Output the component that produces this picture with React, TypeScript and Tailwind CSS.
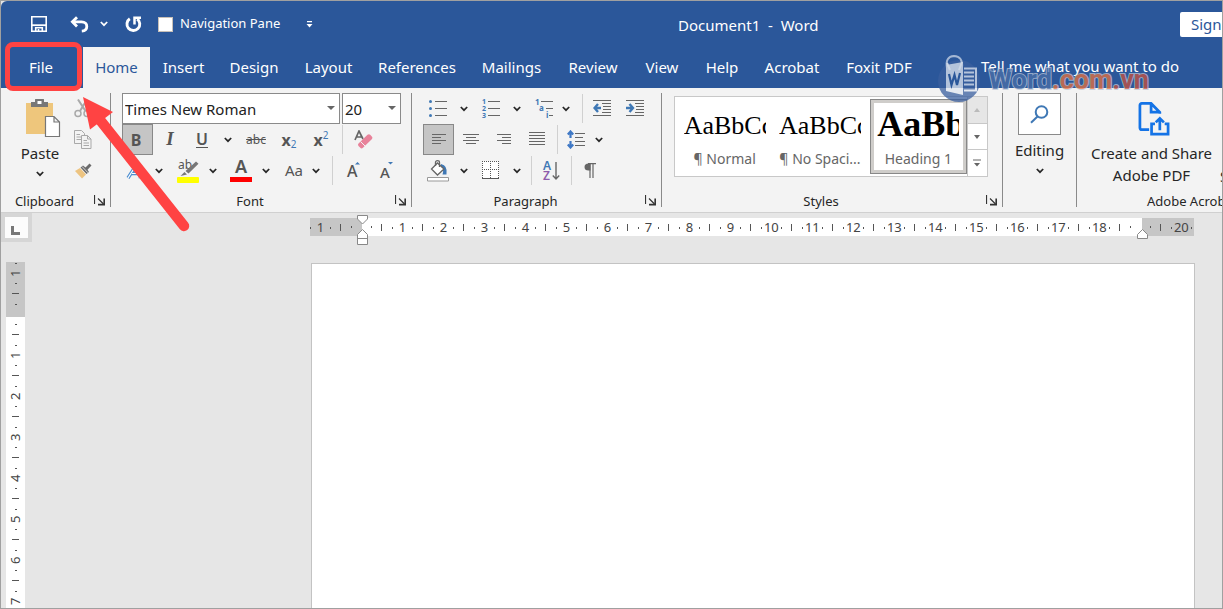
import { ReactNode } from 'react';

const tabs = [
  { name: 'Home', width: 'w-[67px]' },
  { name: 'Insert', width: 'w-[67px]' },
  { name: 'Design', width: 'w-[74px]' },
  { name: 'Layout', width: 'w-[75px]' },
  { name: 'References', width: 'w-[102px]' },
  { name: 'Mailings', width: 'w-[87px]' },
  { name: 'Review', width: 'w-[76px]' },
  { name: 'View', width: 'w-[62px]' },
  { name: 'Help', width: 'w-[58px]' },
  { name: 'Acrobat', width: 'w-[82px]' },
  { name: 'Foxit PDF', width: 'w-[92px]' },
];

const styleItems = [
  { label: '¶ Normal', heading: false },
  { label: '¶ No Spaci...', heading: false },
  { label: 'Heading 1', heading: true },
];

// 0 and 19 sit under the indent markers, so they have no number
const horizontalMarks = [
  '1', '', '1', '2', '3', '4', '5', '6', '7', '8', '9', '10',
  '11', '12', '13', '14', '15', '16', '17', '18', '', '20',
];
const verticalMarks = ['1', '', '1', '2', '3', '4', '5', '6', '7', '8'];

const Chevron = () => (
  <svg width="8" height="6" viewBox="0 0 8 6" fill="none">
    <path d="M0.8 1 L4 4.2 L7.2 1" stroke="currentColor" strokeWidth="1.7" />
  </svg>
);

const Tool = ({
  label,
  width,
  active = false,
  children,
}: {
  label: string;
  width: string;
  active?: boolean;
  children: ReactNode;
}) => (
  <button
    aria-label={label}
    className={`flex h-[31px] shrink-0 items-center justify-center text-[#555] ${width} ${
      active ? 'border border-[#888] bg-[#c5c5c5]' : ''
    }`}
  >
    {children}
  </button>
);

const Drop = ({ label, width }: { label: string; width: string }) => (
  <button
    aria-label={label}
    className={`flex h-[31px] shrink-0 items-center justify-center text-[#262626] ${width}`}
  >
    <Chevron />
  </button>
);

const Divider = ({ margin }: { margin: string }) => (
  <div className={`h-[29px] w-px shrink-0 self-center bg-[#d0d0d0] ${margin}`} />
);

const Group = ({
  name,
  width,
  children,
}: {
  name: string;
  width: string;
  children: ReactNode;
}) => (
  <section
    aria-label={name || 'Editing'}
    className={`flex shrink-0 flex-col border-r border-[#8a8a8a] ${width}`}
  >
    <div className="h-[93px]">{children}</div>
    <div className="flex h-[21px] items-center">
      <span className="flex-1 pt-[9px] text-center text-[13px] leading-[21px]">{name}</span>
      {name && (
        <button aria-label={`${name} settings`} className="flex w-[22px] justify-end pt-[8px] pr-[4px]">
          <svg width="12" height="11" viewBox="0 0 12 11" fill="none" stroke="#333">
            <path d="M0.5 0 V9 M4 3.5 L9.5 9" strokeWidth="1.2" />
            <path d="M10.2 3.5 V9.6 H4" strokeWidth="1.6" />
          </svg>
        </button>
      )}
    </div>
  </section>
);

const TitleBar = () => (
  <header className="flex h-[46px] items-center text-white">
    <div className="flex w-[677px] shrink-0 items-center pl-[30px]">
      <button aria-label="Save">
        <svg width="16" height="16" viewBox="0 0 16 16" fill="none" stroke="#fff">
          <path d="M0.8 0.8 H15.2 V15.2 H0.8 Z" strokeWidth="1.6" />
          <path d="M1 9.2 H15" strokeWidth="1.8" />
          <path d="M4.7 15 V11.7 H11.3 V15 M7.5 13 V15" strokeWidth="1.6" />
        </svg>
      </button>
      <button aria-label="Undo" className="ml-[23px]">
        <svg width="19" height="17" viewBox="0 0 19 17" fill="none" stroke="#fff" strokeWidth="2.8">
          <path d="M7 1.2 L2.4 5.8 L7 10.4" />
          <path d="M2.5 5.8 H11.5 C15.2 5.8 16.8 8.2 16.8 10.4 C16.8 13.4 14.6 14.9 11.8 15.1" />
        </svg>
      </button>
      <button aria-label="Undo history" className="ml-[11px]">
        <Chevron />
      </button>
      <button aria-label="Redo" className="ml-[17px]">
        <svg width="17" height="17" viewBox="0 0 17 17" fill="none" stroke="#fff" strokeWidth="2.9">
          <path d="M4.8 2.8 A6.4 6.4 0 1 0 12.2 3" />
          <path d="M9.5 8.4 V1.8 H16" strokeWidth="2.5" />
        </svg>
      </button>
      <label className="ml-[16px] flex items-center gap-[7px] text-[13px]">
        <input
          type="checkbox"
          className="h-[15px] w-[15px] appearance-none border border-[#c8c0b8] bg-white"
        />
        Navigation Pane
      </label>
      <button aria-label="Customize toolbar" className="ml-[26px]">
        <svg width="7" height="7" viewBox="0 0 7 7" fill="#fff">
          <path d="M1 0 H6 V1.2 H1 Z M0.5 3 H6.5 L3.5 6.4 Z" />
        </svg>
      </button>
    </div>
    <h1 className="pt-[2px] text-[15px] whitespace-pre">Document1  -  Word</h1>
    <button className="ml-auto h-[25px] w-[42px] overflow-hidden rounded-l-[2px] bg-white pl-[11px] text-left text-[15px] whitespace-nowrap text-[#2b579a]">
      Sign in
    </button>
  </header>
);

const TabBar = () => (
  <nav className="flex h-[41px] shrink-0 text-[15px] text-white">
    <button className="w-[82px] shrink-0 pr-[2px]">File</button>
    {tabs.map((tab) => (
      <button
        key={tab.name}
        className={`shrink-0 whitespace-nowrap ${tab.width} ${
          tab.name === 'Home' ? 'bg-[#f3f3f3] text-[#2b579a]' : ''
        }`}
      >
        {tab.name}
      </button>
    ))}
    <button className="ml-auto pr-[43px] pb-[2px] whitespace-nowrap">
      Tell me what you want to do
    </button>
  </nav>
);

const ClipboardGroup = () => (
  <Group name="Clipboard" width="w-[110px]">
    <div className="flex h-full pl-[5px]">
      <button className="flex w-[68px] flex-col items-center pt-[5px] text-[15px] leading-[20px]">
        <svg className="ml-[6px]" width="36" height="40" viewBox="0 0 36 40">
          <path d="M1 5 H28 V36 H1 Z" fill="#eec67c" />
          <path d="M6 4 H10 V1.5 Q10 1 10.5 1 H18.5 Q19 1 19 1.5 V4 H23 V9 H6 Z" fill="#777" />
          <rect x="12.5" y="3" width="4" height="3" fill="#fff" />
          <path
            d="M20.5 18.5 H29 L34.5 24 V38.5 H20.5 Z M29 18.5 V24 H34.5"
            fill="#fff"
            stroke="#777"
            strokeWidth="1.2"
          />
        </svg>
        <span className="pt-[5px]">Paste</span>
        <span className="flex pt-[8px]">
          <Chevron />
        </span>
      </button>
      <div className="flex w-[18px] flex-col">
        <Tool label="Cut" width="w-[18px]">
          <svg width="18" height="19" viewBox="0 0 18 19" fill="none" stroke="#a9a9a9">
            <path d="M4 0.5 L11.5 12 M13 0.5 L6 12" strokeWidth="2" />
            <circle cx="4" cy="14.5" r="3" strokeWidth="1.5" />
            <circle cx="13" cy="14.5" r="3" strokeWidth="1.5" />
          </svg>
        </Tool>
        <Tool label="Copy" width="w-[18px]">
          <svg width="18" height="19" viewBox="0 0 18 19" fill="#f3f3f3" stroke="#a9a9a9">
            <path d="M0.5 0.5 H7.5 L10.5 3.5 V13.5 H0.5 Z" />
            <path d="M2.5 4.5 H6 M2.5 7 H8 M2.5 9.5 H8" />
            <path d="M7.5 5.5 H13.5 L17 9 V18.5 H7.5 Z M13.5 5.5 V9 H17" />
            <path d="M9.5 10.5 H13 M9.5 13 H15 M9.5 15.5 H15" />
          </svg>
        </Tool>
        <Tool label="Format painter" width="w-[18px]">
          <svg width="18" height="16" viewBox="0 0 18 16">
            <path d="M1 8 L6 5 L12 11.5 L8 15.5 Z" fill="#edc481" />
            <path d="M6.5 4.5 L9 2.5 L11.5 4.5 L15.5 0.5 L17.5 2.5 L13.5 6.8 L15 9 L12.5 11 Z" fill="#6b6b6b" />
            <path d="M8 3.5 L14 9.8" stroke="#f3f3f3" strokeWidth="0.8" />
          </svg>
        </Tool>
      </div>
    </div>
  </Group>
);

const Combo = ({ label, value, width }: { label: string; value: string; width: string }) => (
  <div className={`relative h-[31px] shrink-0 ${width}`}>
    <select
      aria-label={label}
      defaultValue={value}
      className="h-full w-full appearance-none border border-[#8a8a8a] bg-white pt-[1px] pl-[2px] text-[15px] text-[#222]"
    >
      <option>{value}</option>
    </select>
    <svg
      className="pointer-events-none absolute top-[13px] right-[5px]"
      width="8"
      height="4"
      viewBox="0 0 8 4"
      fill="#666"
    >
      <path d="M0 0 H8 L4 4 Z" />
    </svg>
  </div>
);

const FontGroup = () => (
  <Group name="Font" width="w-[301px]">
    <div className="flex gap-[2px] pl-[11px]">
      <Combo label="Font" value="Times New Roman" width="w-[218px]" />
      <Combo label="Font size" value="20" width="w-[59px]" />
    </div>
    <div className="flex pl-[11px]">
      <Tool label="Bold" width="w-[31px]" active>
        <span className="pr-[3px] text-[16px] font-bold">B</span>
      </Tool>
      <Tool label="Italic" width="w-[34px]">
        <span className="font-['Liberation_Serif',serif] text-[19px] font-bold italic">I</span>
      </Tool>
      <Tool label="Underline" width="w-[30px]">
        <span className="border-b border-[#555] text-[16px] leading-[16px] font-semibold">U</span>
      </Tool>
      <Drop label="Underline styles" width="w-[22px]" />
      <Tool label="Strikethrough" width="w-[34px]">
        <span className="pt-[1px] text-[12px] line-through">abc</span>
      </Tool>
      <Tool label="Subscript" width="w-[32px]">
        <span className="text-[16px] font-bold">x</span>
        <span className="pt-[9px] text-[10px] text-[#3f78b5]">2</span>
      </Tool>
      <Tool label="Superscript" width="w-[32px]">
        <span className="text-[16px] font-bold">x</span>
        <span className="pb-[9px] text-[10px] text-[#3f78b5]">2</span>
      </Tool>
      <Divider margin="ml-[5px]" />
      <Tool label="Clear formatting" width="w-[40px]">
        <svg width="19" height="19" viewBox="0 0 19 19">
          <path d="M1 10 L5 1 L9 9 M2.5 7 H8" fill="none" stroke="#666" strokeWidth="1.7" />
          <path
            d="M4.5 13.5 L13.5 4.8 Q15 3.5 16.2 4.8 L18 6.8 Q18.9 7.9 18 9 L9 17.8 Q7.5 19 6.3 17.8 L4.5 16 Q3.4 14.7 4.5 13.5 Z"
            fill="#e8829a"
          />
          <path d="M6.6 11.6 L11 16" stroke="#f3f3f3" />
        </svg>
      </Tool>
    </div>
    <div className="flex pl-[11px]">
      <Tool label="Text effects" width="w-[26px]">
        <svg width="18" height="18" viewBox="0 0 18 18" fill="none">
          <path d="M2 16 L11 2 L14.5 16 M6 11.5 H13" stroke="#4f8fd0" strokeWidth="3.4" />
          <path d="M2 16 L11 2 L14.5 16 M6 11.5 H13" stroke="#fff" strokeWidth="1.2" />
        </svg>
      </Tool>
      <Drop label="Text effect options" width="w-[22px]" />
      <Tool label="Highlight" width="ml-[2px] w-[32px]">
        <svg className="overflow-visible" width="24" height="24" viewBox="0 0 24 24">
          <text x="2" y="10" fontSize="12" fill="#555">
            ab
          </text>
          <path d="M20 2.5 L22.5 4.8 L12.5 14.5 L9.5 12 Z M8.5 13 L11 15.5 L4.5 17 Z" fill="#777" />
          <rect x="1" y="18" width="22" height="6" rx="1" fill="#ff0" />
        </svg>
      </Tool>
      <Drop label="Highlight colors" width="w-[18px]" />
      <Tool label="Font color" width="ml-[4px] w-[30px]">
        <svg className="overflow-visible" width="22" height="24" viewBox="0 0 22 24">
          <text x="11" y="14" fontSize="18" fontWeight="600" textAnchor="middle" fill="#555">
            A
          </text>
          <rect y="18" width="22" height="5" fill="#f00" />
        </svg>
      </Tool>
      <Drop label="Font colors" width="w-[20px]" />
      <Tool label="Change case" width="ml-[2px] w-[32px]">
        <span className="text-[15px]">Aa</span>
      </Tool>
      <Drop label="Case options" width="w-[12px]" />
      <Divider margin="ml-[10px]" />
      <Tool label="Grow font" width="w-[40px]">
        <svg className="overflow-visible" width="14" height="18" viewBox="0 0 14 18">
          <text x="1" y="15" fontSize="16" fontWeight="500" fill="#555">
            A
          </text>
          <path d="M9 2.5 L11.500 0 L14 2.5 Z" fill="#3f78b5" />
        </svg>
      </Tool>
      <Tool label="Shrink font" width="w-[26px]">
        <svg className="overflow-visible" width="14" height="18" viewBox="0 0 14 18">
          <text x="1" y="16" fontSize="15" fontWeight="500" fill="#555">
            A
          </text>
          <path d="M9 0 H14 L11.5 2.5 Z" fill="#3f78b5" />
        </svg>
      </Tool>
    </div>
  </Group>
);

const Lines = ({ d }: { d: string }) => (
  <svg width="18" height="17" viewBox="0 0 18 17" stroke="#666" fill="none" shapeRendering="crispEdges">
    <path d={d} />
  </svg>
);

const ParagraphGroup = () => (
  <Group name="Paragraph" width="w-[250px]">
    <div className="flex pl-[11px]">
      <Tool label="Bullets" width="w-[30px]">
        <svg width="20" height="17" viewBox="0 0 20 17">
          <path d="M7 1.5 H19 M7 8.5 H19 M7 15.5 H19" stroke="#666" />
          <g fill="#3f78b5">
            <circle cx="2.5" cy="1.5" r="1.5" />
            <circle cx="2.5" cy="8.5" r="1.5" />
            <circle cx="2.5" cy="15.5" r="1.5" />
          </g>
        </svg>
      </Tool>
      <Drop label="Bullet library" width="w-[22px]" />
      <Tool label="Numbering" width="w-[32px]">
        <svg className="overflow-visible" width="20" height="19" viewBox="0 0 20 19">
          <path d="M7 2.5 H19 M7 9.5 H19 M7 16.5 H19" stroke="#666" />
          <g fill="#3f78b5" fontSize="7" fontWeight="700">
            <text x="1" y="5">1</text>
            <text x="1" y="12">2</text>
            <text x="1" y="19">3</text>
          </g>
        </svg>
      </Tool>
      <Drop label="Numbering library" width="w-[20px]" />
      <Tool label="Multilevel list" width="w-[34px]">
        <svg className="overflow-visible" width="20" height="19" viewBox="0 0 20 19">
          <path d="M7 2.5 H19 M12 9.5 H19 M15 16.5 H19" stroke="#666" />
          <g fill="#3f78b5" fontSize="8" fontWeight="700">
            <text x="1" y="6">1</text>
            <text x="5" y="12">a</text>
            <text x="12" y="19">i</text>
          </g>
        </svg>
      </Tool>
      <Drop label="List library" width="w-[10px]" />
      <Divider margin="ml-[11px]" />
      <Tool label="Decrease indent" width="w-[38px]">
        <svg width="18" height="17" viewBox="0 0 18 17" fill="none" stroke="#666">
          <path d="M0 0.5 H18 M9 3.5 H18 M10 6.5 H18 M10 9.5 H18 M9 12.5 H18 M0 15.5 H18" />
          <path d="M5 4 L1.5 8 L5 12 M1.5 8 H8" stroke="#3f78b5" strokeWidth="2.4" />
        </svg>
      </Tool>
      <Tool label="Increase indent" width="w-[28px]">
        <svg width="18" height="17" viewBox="0 0 18 17" fill="none" stroke="#666">
          <path d="M0 0.5 H18 M9 3.5 H18 M10 6.5 H18 M10 9.5 H18 M9 12.5 H18 M0 15.5 H18" />
          <path d="M3.5 4 L7 8 L3.5 12 M0 8 H7" stroke="#3f78b5" strokeWidth="2.4" />
        </svg>
      </Tool>
    </div>
    <div className="flex pl-[11px]">
      <Tool label="Align left" width="w-[31px]" active>
        <Lines d="M2 3.5 H16 M2 6.5 H11 M2 9.5 H16 M2 12.5 H11" />
      </Tool>
      <Tool label="Center" width="w-[34px]">
        <Lines d="M1 3.5 H17 M4 6.5 H14 M1 9.5 H17 M4 12.5 H14" />
      </Tool>
      <Tool label="Align right" width="w-[32px]">
        <Lines d="M2 3.5 H16 M7 6.5 H16 M2 9.5 H16 M7 12.5 H16" />
      </Tool>
      <Tool label="Justify" width="w-[34px]">
        <Lines d="M1 1.5 H17 M1 4.5 H17 M1 7.5 H17 M1 10.5 H17 M1 13.5 H17" />
      </Tool>
      <Divider margin="ml-[3px]" />
      <Tool label="Line spacing" width="w-[36px]">
        <svg width="18" height="19" viewBox="0 0 18 19" fill="none" stroke="#666">
          <path d="M8 3.5 H18 M8 7.5 H16 M8 11.5 H18 M8 15.5 H18" />
          <path
            d="M3.5 1 V8 M3.5 11 V18 M0.8 4.5 L3.5 1.5 L6.2 4.5 M0.8 14.5 L3.5 17.5 L6.2 14.5"
            stroke="#3f78c5"
            strokeWidth="2.2"
          />
        </svg>
      </Tool>
      <Drop label="Spacing options" width="w-[10px]" />
    </div>
    <div className="flex pl-[11px]">
      <Tool label="Shading" width="w-[30px]">
        <svg width="22" height="22" viewBox="0 0 22 22" fill="none" stroke="#666">
          <path d="M14 4 Q21 5.5 19.5 14.5 L15.5 14.5 Q17.5 9.5 13.5 7 Z" fill="#3f78b5" stroke="none" />
          <path d="M10.5 3 L17 9 L10.5 15 L4.5 9 Z" fill="#fff" strokeWidth="1.3" />
          <path d="M8.5 6 V2.5 Q8.5 0.7 10.5 0.7 Q12.5 0.7 12.5 2.5 V7" strokeWidth="1.3" />
          <path d="M0.5 17.5 H21.5 V21 H0.5 Z" fill="#fff" stroke="#999" />
        </svg>
      </Tool>
      <Drop label="Shading colors" width="w-[22px]" />
      <Tool label="Borders" width="w-[32px]">
        <svg width="18" height="19" viewBox="0 0 18 19" fill="none" stroke="#555" shapeRendering="crispEdges">
          <path d="M0 0 H17 V17 H0 Z" fill="#fff" stroke="none" />
          <path
            d="M0 0.5 H17 M0.5 0 V17 M8.5 0 V17 M16.5 0 V17 M0 8.5 H17"
            strokeDasharray="1 1"
          />
          <path d="M0 17.5 H17" />
        </svg>
      </Tool>
      <Drop label="Border options" width="w-[20px]" />
      <Divider margin="ml-[4px]" />
      <Tool label="Sort" width="w-[39px]">
        <svg className="overflow-visible" width="18" height="20" viewBox="0 0 18 20" fill="none">
          <g fontSize="12" fontWeight="600">
            <text x="0" y="9" fill="#3f78b5">A</text>
            <text x="0" y="19" fill="#8e5bab">Z</text>
          </g>
          <path d="M13 1 V18 M9.8 14.5 L13 18 L16.2 14.5" stroke="#666" strokeWidth="1.4" />
        </svg>
      </Tool>
      <Divider margin="ml-0" />
      <Tool label="Show paragraph marks" width="w-[36px]">
        <svg width="12" height="16" viewBox="0 0 12 16" fill="none" stroke="#666">
          <path d="M4 0.7 H12 M6 0.7 V15 M9 0.7 V15" strokeWidth="1.2" />
          <path d="M6.500 0.5 H4.5 Q0.5 0.5 0.5 4 Q0.5 7.5 4.5 7.5 H6.500 Z" fill="#666" stroke="none" />
        </svg>
      </Tool>
    </div>
  </Group>
);

const StylesGroup = () => (
  <Group name="Styles" width="w-[341px]">
    <div className="pt-[3px] pr-[14px] pl-[12px]">
      <div className="flex h-[81px] border border-[#c8c8c8] bg-white pl-[2px]">
        {styleItems.map((item) => (
          <button
            key={item.label}
            className={`flex flex-1 flex-col items-center ${
              item.heading
                ? 'my-[2px] ml-[2px] border border-[#888] bg-white pt-[3px] ring-[3px] ring-[#cfcdca] ring-inset'
                : 'pt-[7px]'
            }`}
          >
            <span
              className={`flex w-[82px] overflow-hidden font-['Liberation_Serif',serif] text-black ${
                item.heading ? 'h-[43px] text-[36px] leading-[42px] font-bold' : 'h-[42px] text-[26px] leading-[44px]'
              }`}
            >
              {item.heading ? 'AaBb' : 'AaBbCc'}
            </span>
            <span className="text-[14px] leading-[26px] whitespace-nowrap text-[#666]">
              {item.label}
            </span>
          </button>
        ))}
        <div className="flex w-[20px] flex-col border-l border-[#c8c8c8]">
          <button
            aria-label="Previous styles"
            className="flex flex-1 items-center justify-center border-b border-[#c8c8c8] bg-[#e6e6e6]"
          >
            <svg width="6" height="4" viewBox="0 0 6 4" fill="#bbb">
              <path d="M0 4 H6 L3 0 Z" />
            </svg>
          </button>
          <button
            aria-label="Next styles"
            className="flex flex-1 items-center justify-center border-b border-[#c8c8c8]"
          >
            <svg width="6" height="4" viewBox="0 0 6 4" fill="#666">
              <path d="M0 0 H6 L3 4 Z" />
            </svg>
          </button>
          <button aria-label="More styles" className="flex flex-1 items-center justify-center">
            <svg width="8" height="8" viewBox="0 0 8 8" fill="#666">
              <path d="M0 0.5 H8 V1.5 H0 Z M1 4 H7 L4 7.5 Z" />
            </svg>
          </button>
        </div>
      </div>
    </div>
  </Group>
);

const EditingGroup = () => (
  <Group name="" width="w-[74px]">
    <button className="flex w-full flex-col items-center text-[15px] leading-[20px]">
      <span className="flex h-[42px] w-[43px] items-center justify-center border border-[#8a8a8a] bg-white">
        <svg width="19" height="19" viewBox="0 0 19 19" fill="none" stroke="#3f78b5" strokeWidth="2">
          <circle cx="11.5" cy="7" r="5.8" />
          <path d="M7.5 11.5 L1 17.8" />
        </svg>
      </span>
      <span className="pt-[5px]">Editing</span>
      <span className="flex pt-[8px]">
        <Chevron />
      </span>
    </button>
  </Group>
);

const AcrobatGroup = () => (
  <section aria-label="Adobe Acrobat" className="flex min-w-0 flex-1 flex-col overflow-hidden">
    <div className="flex h-[93px] pl-[6px] text-[15px] leading-[22px] whitespace-nowrap">
      <button className="flex w-[137px] shrink-0 flex-col items-center pt-[9px]">
        <svg
          className="ml-[4px]"
          width="32"
          height="35"
          viewBox="0 0 32 35"
          fill="none"
          stroke="#1473e6"
          strokeWidth="2.8"
        >
          <path d="M11 28.5 H3.5 Q1.5 28.5 1.5 26.5 V3.5 Q1.5 1.5 3.5 1.5 H13 L22 10.5 V12 M13 1.5 V10.5 H22" />
          <path d="M17 22.5 H13.5 V33 H30.5 V22.5 H27" />
          <path d="M22 29 V17 M17.8 21 L22 16.8 L26.2 21" />
        </svg>
        <span className="pt-[6px]">Create and Share</span>
        <span>Adobe PDF</span>
      </button>
      <button className="shrink-0 pt-[72px]">Signatures</button>
    </div>
    <span className="h-[21px] pt-[5px] pl-[70px] text-[13px] leading-[21px] whitespace-nowrap">
      Adobe Acrobat
    </span>
  </section>
);

const HorizontalRuler = () => (
  <div className="relative mt-[5px] mr-px h-[18px] text-[13px] text-[#444]">
    <div className="flex h-full overflow-hidden bg-white">
      <div className="flex h-full w-full border-x-[52px] border-[#c6c6c6]">
        <div className="-mx-[57px] flex h-full shrink-0">
          {horizontalMarks.map((mark, i) => (
            <div key={i} className="grid w-[41px] shrink-0 grid-cols-4 place-items-center">
              <i className="h-[2px] w-px bg-[#555]" />
              <span className="flex w-0 justify-center">{mark}</span>
              <i className="h-[2px] w-px bg-[#555]" />
              <i className="h-[7px] w-px bg-[#555]" />
            </div>
          ))}
        </div>
      </div>
    </div>
    <svg
      className="absolute -top-[3px] left-[47px]"
      width="11"
      height="30"
      viewBox="0 0 11 30"
      fill="#fff"
      stroke="#888"
    >
      <path d="M0.5 0.5 H10.5 V4 L5.5 9 L0.5 4 Z" />
      <path d="M0.5 29.5 H10.5 V19.5 L5.5 14.5 L0.5 19.5 Z M0.5 23.5 H10.5" />
    </svg>
    <svg
      className="absolute top-[11px] right-[46px]"
      width="11"
      height="10"
      viewBox="0 0 11 10"
      fill="#fff"
      stroke="#888"
    >
      <path d="M0.5 9.5 H10.5 V5.5 L5.5 0.5 L0.5 5.5 Z" />
    </svg>
  </div>
);

const VerticalRuler = () => (
  <div className="ml-[5px] min-h-0 w-[19px] flex-1 overflow-hidden bg-white text-[13px] text-[#444]">
    <div className="border-t-[55px] border-[#c6c6c6]">
      <div className="-mt-[59px]">
        {verticalMarks.map((mark, i) => (
          <div key={i} className="grid h-[41px] grid-rows-4 place-items-center">
            <i className="h-px w-[2px] bg-[#555]" />
            <span className="flex h-0 rotate-180 justify-center [writing-mode:vertical-rl]">
              {mark}
            </span>
            <i className="h-px w-[2px] bg-[#555]" />
            <i className="h-px w-[7px] bg-[#555]" />
          </div>
        ))}
      </div>
    </div>
  </div>
);

const Workspace = () => (
  <main className="flex min-h-0 flex-1 bg-[#e6e6e6]">
    <div className="flex w-[309px] shrink-0 flex-col">
      <div className="mb-[20px] h-[29px] w-[31px] shrink-0 bg-[#d6d6d6] p-[4px]">
        <button
          aria-label="Tab stop"
          className="flex h-full w-[23px] items-end bg-[#fcfcfc] pb-[3px] pl-[6px]"
        >
          <i className="h-[9px] w-[9px] border-b-[3px] border-l-[3px] border-[#777]" />
        </button>
      </div>
      <VerticalRuler />
    </div>
    <div className="mr-[27px] flex min-w-0 flex-1 flex-col">
      <HorizontalRuler />
      <div className="mt-[27px] ml-px flex-1 border border-b-0 border-[#c3c3c3] bg-white" />
    </div>
  </main>
);

const Watermark = () => (
  <div className="pointer-events-none absolute top-[53px] right-[73px] flex items-center gap-[6px] opacity-75">
    <svg width="48" height="50" viewBox="0 0 48 50" fill="none">
      <circle cx="24" cy="27" r="21" fill="#3a5f9f" />
      <path d="M12 14 Q10 2.5 19 2 Q28 2.5 27 13" stroke="#cdd8e8" strokeWidth="2" />
      <path d="M11 11 L28 8 V41 L11 37 Z" fill="#e2e8f1" />
      <path d="M12 9 L15 16 M27 8 L24 16" stroke="#fff" strokeWidth="2" />
      <path d="M29 14.5 H41 V36.5 H29" stroke="#e2e8f1" strokeWidth="2" />
      <path d="M29 18.5 H39 M29 22.5 H39 M29 26.5 H39 M29 30.5 H39" stroke="#e2e8f1" strokeWidth="2" />
      <path d="M14 20 L16.5 31 L19.5 21 L22 31 L25 19" stroke="#2b579a" strokeWidth="2.2" />
    </svg>
    <span className="pt-[2px] font-['Roboto','Liberation_Sans',sans-serif] text-[27px] leading-[32px] font-bold text-[#4a6fa8] [-webkit-text-stroke:2px_#b9c5d8] [paint-order:stroke]">
      Word<span className="text-[#e8713f]">.com</span>
      <span className="text-[#c9513f]">.vn</span>
    </span>
  </div>
);

const Callout = () => (
  <>
    <div className="pointer-events-none absolute top-[41px] left-[4px] h-[49px] w-[77px] rounded-[8px] border-[5px] border-[#ff4343]" />
    <svg
      className="pointer-events-none absolute top-[91px] left-[77px]"
      width="116"
      height="146"
      viewBox="78 92 116 146"
    >
      <path d="M100 120 L184 226" stroke="#ff4343" strokeWidth="10.5" strokeLinecap="round" />
      <path d="M83 97 L113 112 L90 129.5 Z" fill="#ff4343" />
    </svg>
  </>
);

const App = () => (
  <div className="relative flex h-screen flex-col overflow-hidden border border-[#a0a0a0] bg-[#e6e6e6] font-['Noto_Sans','Open_Sans',sans-serif] text-[#262626]">
    <div className="shrink-0 rounded-tl-[6px] bg-[#2b579a]">
      <TitleBar />
      <TabBar />
    </div>
    <div className="flex h-[125px] shrink-0 border-b border-[#d0d0d0] bg-[#f3f3f3] pt-[5px] pb-[5px]">
      <ClipboardGroup />
      <FontGroup />
      <ParagraphGroup />
      <StylesGroup />
      <EditingGroup />
      <AcrobatGroup />
    </div>
    <Workspace />
    <Watermark />
    <Callout />
  </div>
);

export default App;
